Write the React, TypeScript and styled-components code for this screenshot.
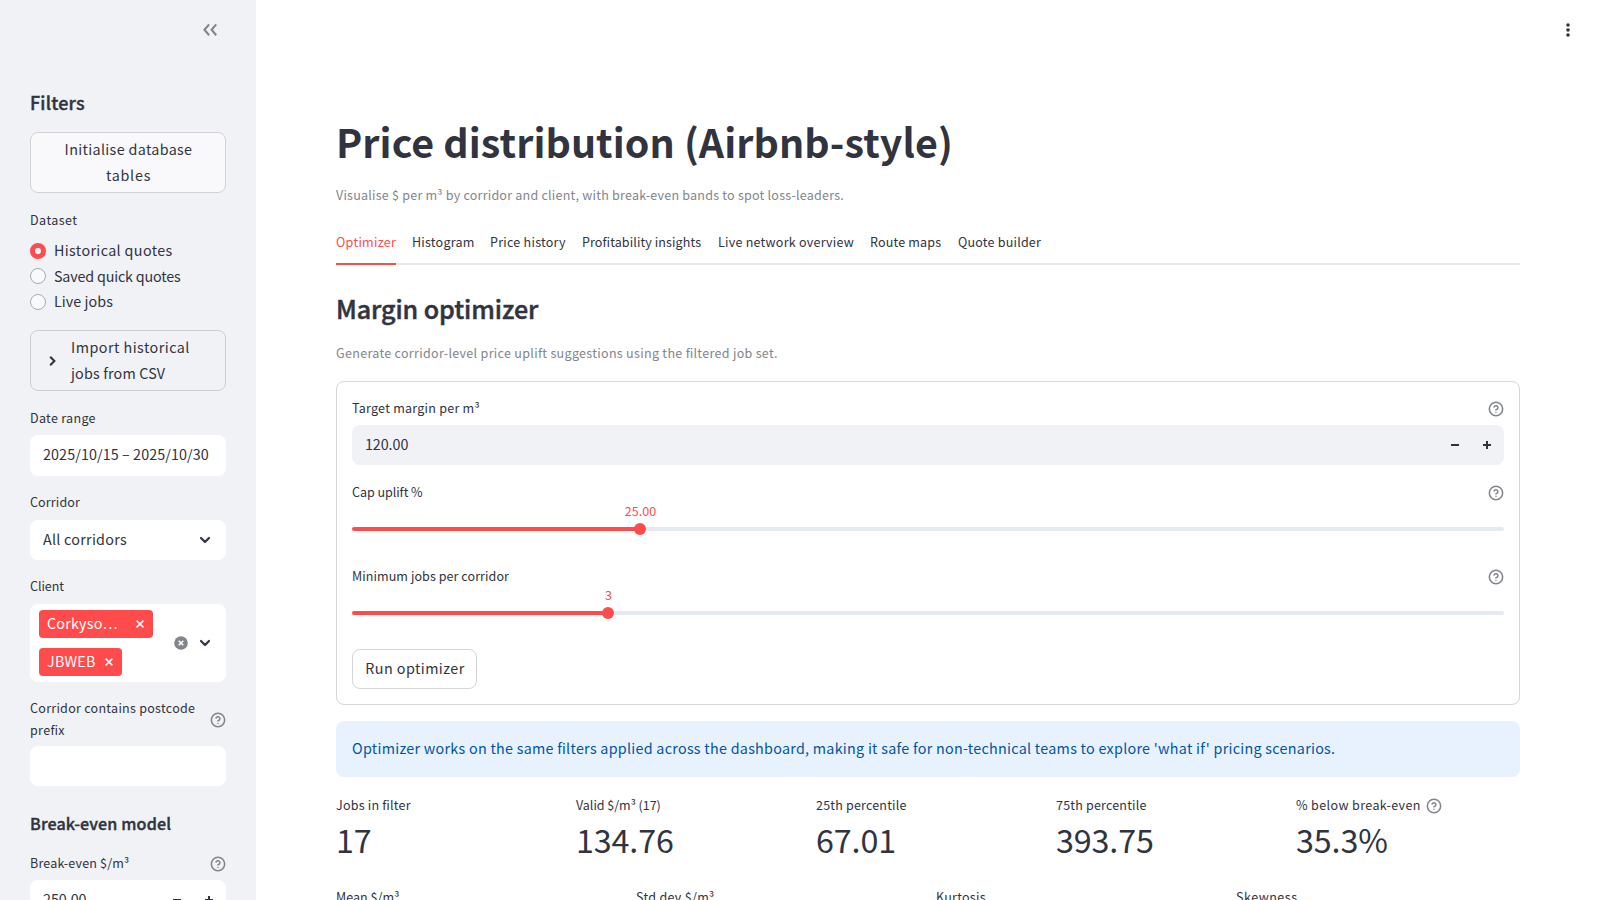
import React from "react";
import styled, { createGlobalStyle, css } from "styled-components";

const ink = "#31333f";
const red = "#ff4b4b";
const muted = "#83858c";

const Global = createGlobalStyle`
  * { box-sizing: border-box; }
  html, body { margin: 0; padding: 0; background: #fff; overflow: hidden; }
  body {
    font-family: "Noto Sans CJK SC", "Noto Sans", sans-serif;
    font-feature-settings: "liga" 1;
    color: ${ink};
  }
`;

/* Type step: the face runs large for its nominal size, so it is scaled down here. */
const type = (size: number, line: number, weight = 400) => css`
  font-size: ${(size * 0.8955).toFixed(2)}px;
  line-height: ${line}px;
  font-weight: ${weight};
`;

const Text = styled.span<{ $size?: number; $line?: number; $weight?: number; $color?: string; $ls?: number; $up?: number; $stroke?: number }>`
  display: block;
  white-space: nowrap;
  ${(p) => type(p.$size ?? 16, p.$line ?? 25.6, p.$weight)}
  color: ${(p) => p.$color ?? "inherit"};
  letter-spacing: ${(p) => (p.$ls ? `${p.$ls}px` : "normal")};
  margin-top: ${(p) => -(p.$up ?? 1)}px;
  margin-bottom: ${(p) => p.$up ?? 1}px;
  ${(p) => p.$stroke && css`-webkit-text-stroke: ${p.$stroke}px currentColor;`}
`;

const Page = styled.div`
  display: flex;
  width: 1600px;
  height: 900px;
  overflow: hidden;
`;

const Sidebar = styled.aside`
  flex: none;
  width: 256px;
  height: 900px;
  overflow: hidden;
  background: #f0f2f6;
  padding: 0 30px;
  display: flex;
  flex-direction: column;
  > * { flex: none; }
`;

const SideTop = styled.div`
  height: 60px;
  padding-right: 6px;
  display: flex;
  align-items: center;
  justify-content: flex-end;
  color: ${muted};
`;

const Spaced = styled.div<{ $mt?: number; $h?: number }>`
  flex: none;
  margin-top: ${(p) => p.$mt ?? 0}px;
  height: ${(p) => (p.$h ? `${p.$h}px` : "auto")};
  display: flex;
  align-items: center;
  justify-content: space-between;
`;

const SideButton = styled.button`
  font-family: inherit;
  color: ${ink};
  margin: 16px 0 0;
  height: 61px;
  width: 100%;
  padding: 0 0 0 1px;
  background: #f9f9fb;
  border: 1px solid #d1d3d9;
  border-radius: 8px;
  display: flex;
  flex-direction: column;
  align-items: center;
  justify-content: center;
`;

const Radios = styled.div`
  margin-top: 7px;
  display: flex;
  flex-direction: column;
`;

const RadioRow = styled.label`
  height: 25.6px;
  display: flex;
  align-items: center;
  gap: 8px;
`;

const Dot = styled.span<{ $on?: boolean }>`
  width: 16px;
  height: 16px;
  border-radius: 50%;
  background: ${(p) => (p.$on ? "#fff" : "#f9f9fb")};
  border: ${(p) => (p.$on ? `5px solid ${red}` : "1px solid #a9abb3")};
`;

const Expander = styled.div`
  margin-top: 15.2px;
  height: 61px;
  border: 1px solid #cbcdd2;
  border-radius: 8px;
  display: flex;
  align-items: center;
  padding: 1px 0 0 13px;
  gap: 11px;
`;

const Field = styled.div<{ $h?: number; $grey?: boolean; $mt?: number }>`
  flex: none;
  margin-top: ${(p) => p.$mt ?? 6}px;
  height: ${(p) => p.$h ?? 40}px;
  border-radius: 8px;
  background: ${(p) => (p.$grey ? "#f0f2f6" : "#fff")};
  padding: 0 13px;
  display: flex;
  align-items: center;
  justify-content: space-between;
`;

const Steps = styled.div`
  display: flex;
  align-items: center;
  gap: 20px;
  margin-right: -2px;
`;

const Tags = styled.div`
  display: flex;
  flex-direction: column;
  align-items: flex-start;
  gap: 10px;
  margin-left: -4px;
`;

const Tag = styled.div<{ $w: number }>`
  width: ${(p) => p.$w}px;
  height: 28px;
  border-radius: 4px;
  background: ${red};
  color: #fff;
  padding: 0 8.6px 0 8px;
  display: flex;
  align-items: center;
  justify-content: space-between;
`;

const FieldIcons = styled.div`
  display: flex;
  align-items: center;
  gap: 11px;
  margin-right: 2px;
`;

const Main = styled.main`
  flex: 1;
  height: 900px;
  overflow: hidden;
  display: flex;
  flex-direction: column;
  > * { flex: none; }
`;

const TopBar = styled.header`
  height: 60px;
  display: flex;
  align-items: center;
  justify-content: flex-end;
  padding-right: 24px;
`;

const Content = styled.div`
  width: 1184px;
  margin-left: 80px;
  padding-top: 56px;
  display: flex;
  flex-direction: column;
  > * { flex: none; }
`;

const TabBar = styled.nav`
  margin-top: 16px;
  height: 43px;
  display: flex;
  gap: 16px;
  align-items: stretch;
  box-shadow: inset 0 -2px 0 #e8e8ea;
`;

const Tab = styled.div<{ $on?: boolean; $w: number }>`
  width: ${(p) => p.$w}px;
  display: flex;
  align-items: center;
  color: ${(p) => (p.$on ? red : ink)};
  box-shadow: ${(p) => (p.$on ? `inset 0 -2px 0 ${red}` : "none")};
`;

const Form = styled.form`
  margin-top: 17px;
  height: 324px;
  border: 1px solid #d6d6d9;
  border-radius: 8px;
  padding: 15px;
  display: flex;
  flex-direction: column;
`;

const Slider = styled.div<{ $at: number }>`
  flex: none;
  display: grid;
  grid-template-columns: ${(p) => p.$at}px 1fr;
  grid-template-rows: 18px 12px;
  margin-bottom: 30px;
`;

const SliderValue = styled.div`
  grid-column: 1;
  justify-self: end;
  width: 60px;
  margin: -4px -30.5px 0 0;
  display: flex;
  justify-content: center;
`;

const Track = styled.div<{ $at: number }>`
  grid-row: 2;
  grid-column: 1 / 3;
  align-self: center;
  height: 4px;
  border-radius: 4px;
  background: linear-gradient(to right, ${red} ${(p) => p.$at}px, #e5e9f1 ${(p) => p.$at}px);
`;

const Thumb = styled.div`
  grid-row: 2;
  grid-column: 1;
  justify-self: end;
  margin-right: -6px;
  width: 12px;
  height: 12px;
  border-radius: 50%;
  background: ${red};
`;

const RunButton = styled.button`
  flex: none;
  font-family: inherit;
  color: ${ink};
  margin: 0;
  width: 125px;
  height: 40px;
  padding: 0 0 0 1px;
  background: #fff;
  border: 1px solid #d6d6d9;
  border-radius: 8px;
  display: flex;
  align-items: center;
  justify-content: center;
`;

const Alert = styled.div`
  margin-top: 16px;
  height: 56px;
  border-radius: 8px;
  background: #e8f2ff;
  color: #0054a3;
  padding: 0 16px;
  display: flex;
  align-items: center;
`;

const Metrics = styled.div<{ $cols: number; $mt: number }>`
  margin-top: ${(p) => p.$mt}px;
  display: grid;
  grid-template-columns: repeat(${(p) => p.$cols}, 1fr);
  gap: 16px;
`;

const MetricLabel = styled.div`
  height: 24px;
  display: flex;
  align-items: center;
  gap: 5px;
`;

const Help = () => (
  <svg width="16" height="16" viewBox="0 0 24 24" fill="none" stroke={muted} strokeWidth="2.3" strokeLinecap="round" strokeLinejoin="round">
    <circle cx="12" cy="12" r="10" />
    <path d="M9.09 9a3 3 0 0 1 5.83 1c0 2-3 3-3 3" />
    <line x1="12" y1="17" x2="12.01" y2="17" />
  </svg>
);

const ChevronsLeft = () => (
  <svg width="20" height="20" viewBox="0 0 20 20" fill="none" stroke="currentColor" strokeWidth="2.1">
    <path d="M9.1 4.4 4.5 9.8l4.6 5.4M16.2 4.4 11.6 9.8l4.6 5.4" />
  </svg>
);

const ChevronRight = () => (
  <svg width="16" height="16" viewBox="0 0 16 16" fill="none" stroke={ink} strokeWidth="2.1">
    <path d="M6.2 3.7 10.4 8 6.2 12.3" />
  </svg>
);

const ChevronDown = () => (
  <svg width="12" height="12" viewBox="0 0 12 12" fill="none" stroke={ink} strokeWidth="2.2" strokeLinecap="round" strokeLinejoin="round">
    <path d="M2 4l4 4 4-4" />
  </svg>
);

const Cross = () => (
  <svg width="8" height="8" viewBox="0 0 8 8" stroke="#fff" strokeWidth="1.5">
    <path d="M.6.6 7.4 7.4M7.4.6.6 7.4" />
  </svg>
);

const Clear = () => (
  <svg width="14" height="14" viewBox="0 0 14 14">
    <circle cx="7" cy="7" r="6.8" fill={muted} />
    <path d="M4.7 4.7 9.3 9.3M9.3 4.7 4.7 9.3" stroke="#fff" strokeWidth="1.5" />
  </svg>
);

const Minus = () => (
  <svg width="12" height="12" viewBox="0 0 12 12" fill={ink}>
    <rect x="2" y="5" width="8" height="2" />
  </svg>
);

const Plus = () => (
  <svg width="12" height="12" viewBox="0 0 12 12" fill={ink}>
    <rect x="2" y="5" width="8" height="2" />
    <rect x="5" y="2" width="2" height="8" />
  </svg>
);

const Dots = () => (
  <svg width="16" height="16" viewBox="0 0 16 16" fill={ink}>
    <circle cx="8" cy="3" r="1.8" />
    <circle cx="8" cy="8" r="1.8" />
    <circle cx="8" cy="13" r="1.8" />
  </svg>
);

const Small = (p: { children: React.ReactNode; color?: string; ls?: number; up?: number }) => (
  <Text $size={14} $line={22} $color={p.color} $ls={p.ls} $up={p.up}>{p.children}</Text>
);

const tabs: [string, number, number][] = [
  ["Optimizer", 60, 0.28],
  ["Histogram", 62, 0.22],
  ["Price history", 76, 0.25],
  ["Profitability insights", 120, 0.1],
  ["Live network overview", 136, 0.24],
  ["Route maps", 72, 0.17],
  ["Quote builder", 84, 0.2],
];

const metrics: [string, string, number][] = [
  ["Jobs in filter", "17", 0.21],
  ["Valid $/m³ (17)", "134.76", -0.04],
  ["25th percentile", "67.01", 0.18],
  ["75th percentile", "393.75", 0.18],
  ["% below break-even", "35.3%", 0.38],
];

const shape: [string, number][] = [
  ["Mean $/m³", 0.04],
  ["Std dev $/m³", 0.3],
  ["Kurtosis", 0.27],
  ["Skewness", 0.5],
];

export default function App() {
  return (
    <Page>
      <Global />
      <Sidebar>
        <SideTop><ChevronsLeft /></SideTop>
        <Spaced $mt={31} $h={25}><Text $size={20} $line={24} $weight={500} $ls={0.2} $up={2} $stroke={0.4}>Filters</Text></Spaced>
        <SideButton>
          <Text $ls={0.34}>Initialise database</Text>
          <Text $ls={0.75}>tables</Text>
        </SideButton>
        <Spaced $mt={16} $h={22}><Small ls={0.45} up={0}>Dataset</Small></Spaced>
        <Radios>
          <RadioRow><Dot $on /><Text $ls={0.36}>Historical quotes</Text></RadioRow>
          <RadioRow><Dot /><Text $ls={-0.18}>Saved quick quotes</Text></RadioRow>
          <RadioRow><Dot /><Text $ls={0.05}>Live jobs</Text></RadioRow>
        </Radios>
        <Expander>
          <ChevronRight />
          <div>
            <Text $ls={0.47}>Import historical</Text>
            <Text $ls={0.16}>jobs from CSV</Text>
          </div>
        </Expander>
        <Spaced $mt={16.8} $h={22}><Small ls={0.3}>Date range</Small></Spaced>
        <Field $mt={5.2} $h={40.8}><Text $ls={0.09} $up={2}>2025/10/15 – 2025/10/30</Text></Field>
        <Spaced $mt={16} $h={22}><Small ls={0.13}>Corridor</Small></Spaced>
        <Field>
          <Text $ls={0.26}>All corridors</Text>
          <FieldIcons><ChevronDown /></FieldIcons>
        </Field>
        <Spaced $mt={16} $h={22}><Small ls={-0.05}>Client</Small></Spaced>
        <Field $h={78}>
          <Tags>
            <Tag $w={114}><Text $ls={0.2}>Corkyso…</Text><Cross /></Tag>
            <Tag $w={83}><Text $ls={0.25}>JBWEB</Text><Cross /></Tag>
          </Tags>
          <FieldIcons><Clear /><ChevronDown /></FieldIcons>
        </Field>
        <Spaced $mt={16} $h={44}>
          <div>
            <Small ls={0.27}>Corridor contains postcode</Small>
            <Small ls={0.35}>prefix</Small>
          </div>
          <Help />
        </Spaced>
        <Field $mt={4} />
        <Spaced $mt={26} $h={24}><Text $size={18} $line={24} $weight={500} $ls={0.13} $stroke={0.4}>Break-even model</Text></Spaced>
        <Spaced $mt={17} $h={22}><Small ls={0.16}>Break-even $/m³</Small><Help /></Spaced>
        <Field $mt={5}>
          <Text $ls={-0.05}>250.00</Text>
          <Steps><Minus /><Plus /></Steps>
        </Field>
      </Sidebar>
      <Main>
        <TopBar><Dots /></TopBar>
        <Content>
          <Text $size={44} $line={52} $weight={700} $ls={0.08} $up={1}>Price distribution (Airbnb-style)</Text>
          <Spaced $mt={16} $h={22}><Small color={muted} ls={0.222} up={0}>Visualise $ per m³ by corridor and client, with break-even bands to spot loss-leaders.</Small></Spaced>
          <TabBar>
            {tabs.map(([t, w, ls], i) => (
              <Tab key={t} $on={i === 0} $w={w}><Small ls={ls} up={2}>{t}</Small></Tab>
            ))}
          </TabBar>
          <Spaced $mt={28} $h={34}><Text $size={28} $line={34} $weight={500} $ls={-0.06} $up={2} $stroke={0.5}>Margin optimizer</Text></Spaced>
          <Spaced $mt={15} $h={22}><Small color={muted} ls={0.304} up={0}>Generate corridor-level price uplift suggestions using the filtered job set.</Small></Spaced>
          <Form>
            <Spaced $h={24}><Small ls={0.24}>Target margin per m³</Small><Help /></Spaced>
            <Field $grey $mt={4}>
              <Text $ls={-0.08}>120.00</Text>
              <Steps><Minus /><Plus /></Steps>
            </Field>
            <Spaced $mt={16} $h={24}><Small ls={-0.05}>Cap uplift %</Small><Help /></Spaced>
            <Slider $at={288}>
              <SliderValue><Small color={red}>25.00</Small></SliderValue>
              <Track $at={288} />
              <Thumb />
            </Slider>
            <Spaced $h={24}><Small ls={0.07}>Minimum jobs per corridor</Small><Help /></Spaced>
            <Slider $at={256}>
              <SliderValue><Small color={red}>3</Small></SliderValue>
              <Track $at={256} />
              <Thumb />
            </Slider>
            <RunButton type="button"><Text $ls={0.43}>Run optimizer</Text></RunButton>
          </Form>
          <Alert><Text $ls={0.269}>Optimizer works on the same filters applied across the dashboard, making it safe for non-technical teams to explore 'what if' pricing scenarios.</Text></Alert>
          <Metrics $cols={5} $mt={17}>
            {metrics.map(([l, v, ls], i) => (
              <div key={l}>
                <MetricLabel><Small ls={ls}>{l}</Small>{i === 4 && <Help />}</MetricLabel>
                <Text $size={36} $line={48} $ls={-0.1} $up={3}>{v}</Text>
              </div>
            ))}
          </Metrics>
          <Metrics $cols={4} $mt={20}>
            {shape.map(([l, ls]) => (
              <MetricLabel key={l}><Small ls={ls}>{l}</Small></MetricLabel>
            ))}
          </Metrics>
        </Content>
      </Main>
    </Page>
  );
}
